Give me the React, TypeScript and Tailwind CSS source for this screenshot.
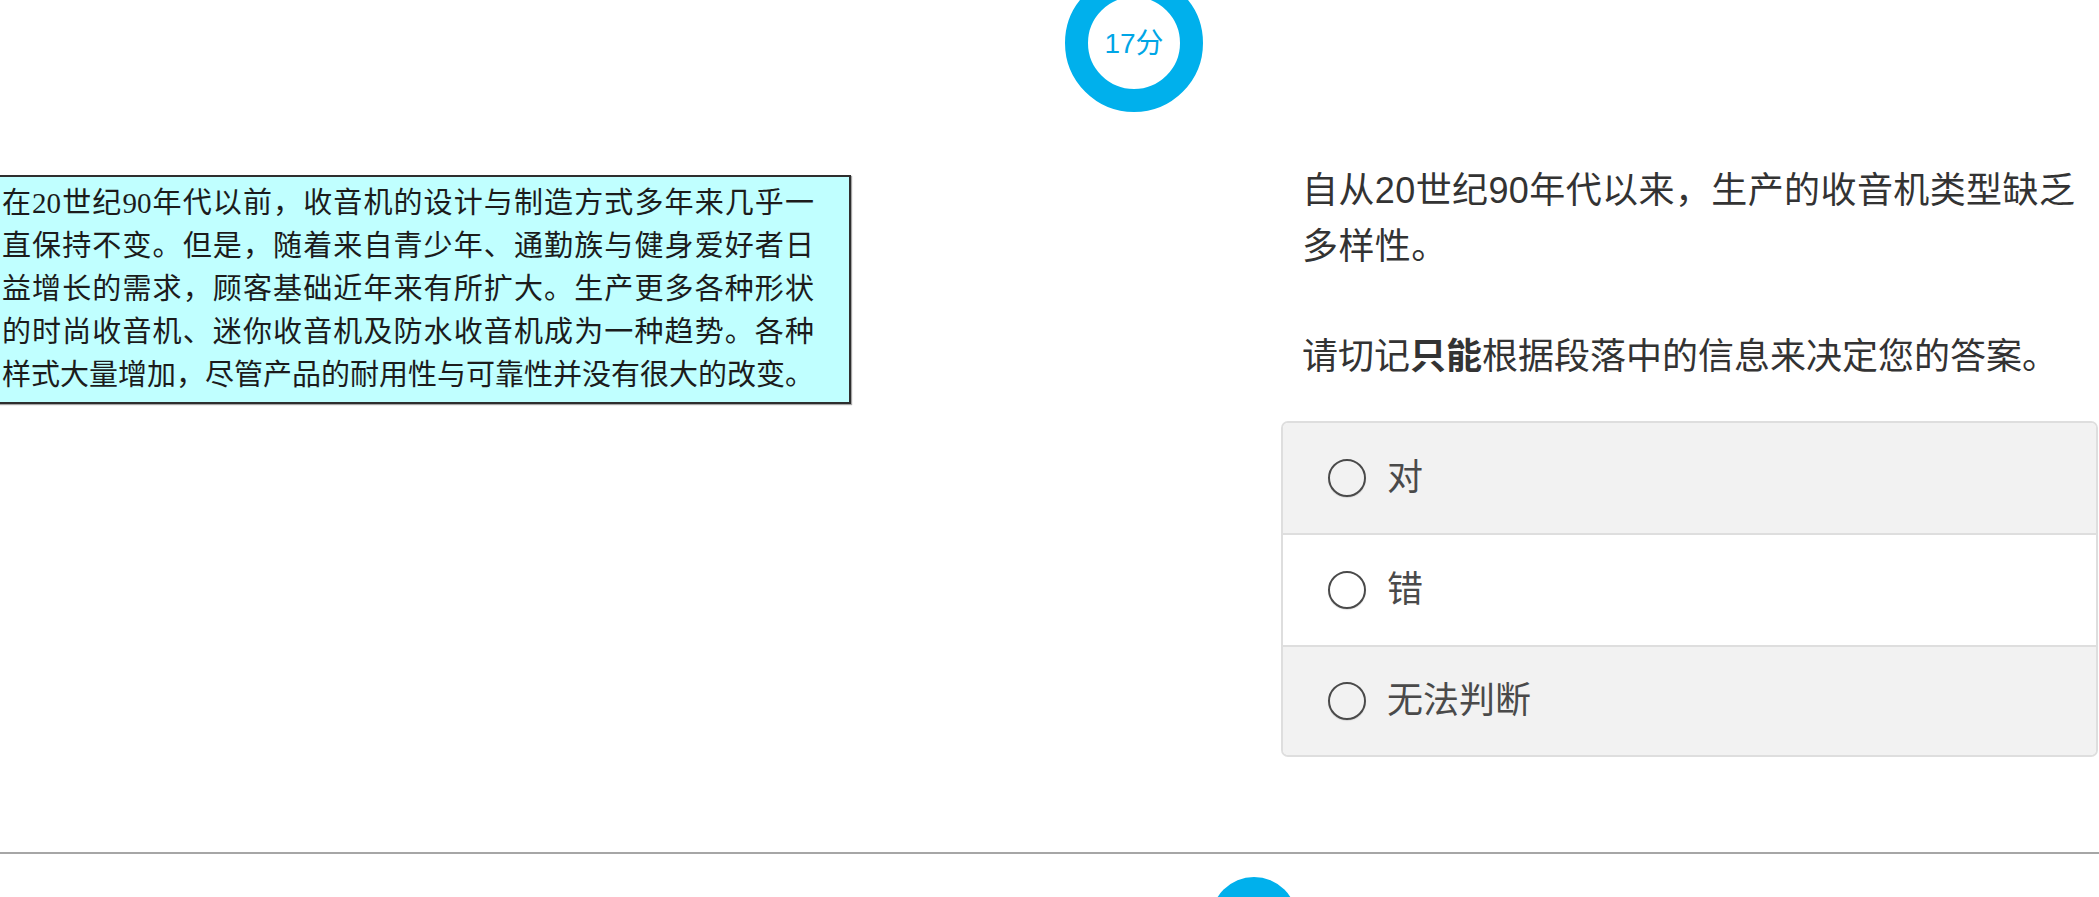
import React from "react";

const passageLines = [
  "在20世纪90年代以前，收音机的设计与制造方式多年来几乎一",
  "直保持不变。但是，随着来自青少年、通勤族与健身爱好者日",
  "益增长的需求，顾客基础近年来有所扩大。生产更多各种形状",
  "的时尚收音机、迷你收音机及防水收音机成为一种趋势。各种",
  "样式大量增加，尽管产品的耐用性与可靠性并没有很大的改变。",
];

const options = [
  { label: "对", bg: "bg-[#f2f2f2]", h: "h-[110px]" },
  { label: "错", bg: "bg-white", h: "h-[112px]" },
  { label: "无法判断", bg: "bg-[#f2f2f2]", h: "h-[110px]" },
];

export default function App() {
  return (
    <div className="h-[897px] w-[2099px] overflow-hidden bg-white font-['Liberation_Sans','Noto_Sans_CJK_SC',sans-serif]">
      {/* timer */}
      <div className="flex h-[163px]">
        <div className="ml-[1065px] -mt-[26px] flex size-[138px] shrink-0 items-center justify-center rounded-full border-[23px] border-[#00b0ec] text-[28px] leading-none text-[#00a6e6]">
          <span className="mt-[1px]">17分</span>
        </div>
      </div>

      {/* main */}
      <div className="flex h-[689px]">
        <div className="w-[1281px] shrink-0">
          <div className="-ml-[10px] mt-[12px] flex h-[229px] w-[861px] flex-col justify-center border-2 border-[#2e2e2e] bg-[#c0ffff] pl-[10px] shadow-[1px_1px_1px_rgba(0,0,0,0.35)]">
            {passageLines.map((l, i) => (
              <div
                key={i}
                className="w-[812px] whitespace-nowrap text-justify text-[29px] leading-[43px] text-[#1c1c1c] [text-align-last:justify] font-['Liberation_Serif','Noto_Sans_CJK_SC',serif]"
              >
                {l}
              </div>
            ))}
          </div>
        </div>

        <div className="w-[818px] shrink-0">
          <div className="pl-[21px] text-[36px] leading-[56px] text-[#333333]">
            <p className="tracking-[0.4px]">
              自从20世纪90年代以来，生产的收音机类型缺乏
              <br />
              多样性。
            </p>
            <p className="mt-[54px]">
              请切记<b className="font-bold">只能</b>根据段落中的信息来决定您的答案。
            </p>
          </div>

          <div className="mt-[36px] w-[817px] overflow-hidden rounded-[7px] border-2 border-[#dedede]">
            {options.map((o, i) => (
              <div
                key={o.label}
                className={`flex items-center ${o.bg} ${o.h} pl-[45px] ${
                  i > 0 ? "border-t-2 border-[#dedede]" : ""
                }`}
              >
                <span className="size-[38px] shrink-0 rounded-full border-2 border-[#4a4a4a] bg-transparent shadow-[0_1px_1px_rgba(0,0,0,0.12)]" />
                <span className="ml-[21px] text-[36px] leading-none text-[#4a4a4a]">
                  {o.label}
                </span>
              </div>
            ))}
          </div>
        </div>
      </div>

      {/* divider */}
      <div className="h-[2px] w-full bg-[#a6a6a6]" />

      {/* bottom button */}
      <div className="flex pt-[23px]">
        <div className="ml-[1211px] size-[86px] shrink-0 rounded-full bg-[#00b0ec]" />
      </div>
    </div>
  );
}
